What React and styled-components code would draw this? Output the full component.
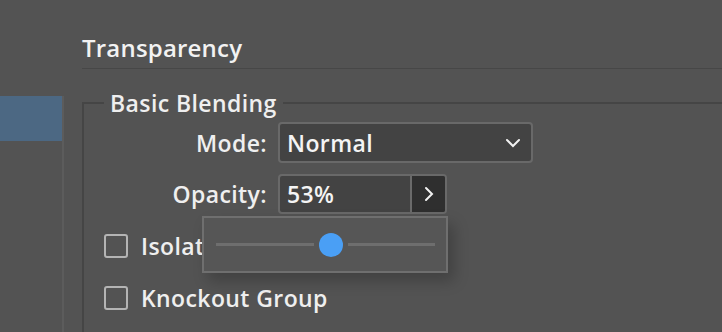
import React from 'react';
import styled, { createGlobalStyle } from 'styled-components';

const GlobalStyle = createGlobalStyle`
  html, body {
    margin: 0;
    padding: 0;
    background: #535353;
    overflow: hidden;
  }
  * { box-sizing: border-box; }
`;

const Window = styled.div`
  display: flex;
  width: 722px;
  height: 332px;
  background: #535353;
  font-family: 'Open Sans', 'Noto Sans', sans-serif;
  font-weight: 600;
  color: #efefef;
  overflow: hidden;
`;

const Sidebar = styled.aside`
  width: 64px;
  flex-shrink: 0;
  padding-top: 96px;
`;

const SideList = styled.div`
  height: 100%;
  border-right: 2px solid #5c5c5c;
`;

const SideItem = styled.div`
  height: 45px;
  background: ${p => (p.$active ? '#4c6883' : 'transparent')};
`;

const Main = styled.main`
  flex: 1;
  padding: 34px 0 0 18px;
  display: flex;
  flex-direction: column;
`;

const Title = styled.h1`
  margin: 0;
  font-size: 24px;
  font-weight: 600;
  letter-spacing: 0.2px;
  line-height: 28px;
  padding-bottom: 6px;
  color: #f2f2f2;
  border-bottom: 1px solid #474747;
`;

const Group = styled.fieldset`
  margin: 22px 0 -20px;
  padding: 7px 0 0 20px;
  border: 2px solid #454545;
  border-right: none;
  flex: 1;
`;

const Legend = styled.legend`
  padding: 0 6px;
  margin-left: 0;
  font-size: 23px;
  line-height: 24px;
  letter-spacing: 0.4px;
  color: #efefef;
`;

const FormGrid = styled.div`
  display: grid;
  grid-template-columns: 163px auto;
  column-gap: 11px;
  row-gap: 11px;
  align-items: center;
`;

const Label = styled.label`
  text-align: right;
  font-size: 23px;
  letter-spacing: 0.4px;
  color: #efefef;
`;

const Select = styled.div`
  width: 255px;
  height: 41px;
  border: 2px solid #696969;
  border-radius: 4px;
  background: #434343;
  display: flex;
  align-items: center;
  justify-content: space-between;
  padding: 0 10px 0 7px;
  font-size: 23px;
  letter-spacing: 0.4px;
  color: #f4f4f4;
`;

const FieldWrap = styled.div`
  position: relative;
  width: 169px;
`;

const NumberField = styled.div`
  height: 40px;
  border: 2px solid #696969;
  border-radius: 4px;
  background: #434343;
  display: flex;
  overflow: hidden;
`;

const NumberValue = styled.div`
  flex: 1;
  display: flex;
  align-items: center;
  padding-left: 7px;
  font-size: 23px;
  letter-spacing: 0.4px;
  color: #f4f4f4;
`;

const StepButton = styled.div`
  width: 35px;
  background: #2f2f2f;
  border-left: 2px solid #6a6a6a;
  display: flex;
  align-items: center;
  justify-content: center;
`;

const Popup = styled.div`
  position: absolute;
  top: calc(100% + 2px);
  right: -1px;
  width: 246px;
  height: 57px;
  background: #565656;
  border: 2px solid #6f6f6f;
  box-shadow: 6px 8px 14px rgba(0, 0, 0, 0.22);
  display: flex;
  align-items: center;
  padding: 0 11px 0 12px;
  z-index: 5;
`;

const Track = styled.div`
  flex: 1;
  display: flex;
  align-items: center;
`;

const TrackPart = styled.div`
  height: 3px;
  background: #6e6e6e;
  flex: ${p => p.$grow};
`;

const Thumb = styled.div`
  width: 24px;
  height: 24px;
  border-radius: 50%;
  background: #4a9ff5;
  margin: 0 5px;
  flex-shrink: 0;
`;

const Checks = styled.div`
  display: flex;
  flex-direction: column;
  gap: 28px;
  margin-top: 20px;
`;

const CheckRow = styled.label`
  display: flex;
  align-items: center;
  gap: 13px;
  height: 24px;
  font-size: 23px;
  letter-spacing: 0.4px;
  color: #efefef;
`;

const Box = styled.span`
  width: 24px;
  height: 24px;
  border: 2px solid #b4b4b4;
  border-radius: 3px;
  flex-shrink: 0;
`;

const ChevronDown = () => (
  <svg width="16" height="10" viewBox="0 0 16 10">
    <path d="M2 2 L8 8 L14 2" fill="none" stroke="#f2f2f2" strokeWidth="2" strokeLinecap="round" />
  </svg>
);

const ChevronRight = () => (
  <svg width="10" height="16" viewBox="0 0 10 16">
    <path d="M2 2 L8 8 L2 14" fill="none" stroke="#f2f2f2" strokeWidth="2" strokeLinecap="round" />
  </svg>
);

export default function App() {
  const opacity = 53;
  return (
    <Window>
      <GlobalStyle />
      <Sidebar>
        <SideList>
          <SideItem $active />
        </SideList>
      </Sidebar>
      <Main>
        <Title>Transparency</Title>
        <Group>
          <Legend>Basic Blending</Legend>
          <FormGrid>
            <Label>Mode:</Label>
            <Select>
              <span>Normal</span>
              <ChevronDown />
            </Select>
            <Label>Opacity:</Label>
            <FieldWrap>
              <NumberField>
                <NumberValue>{opacity}%</NumberValue>
                <StepButton>
                  <ChevronRight />
                </StepButton>
              </NumberField>
              <Popup>
                <Track>
                  <TrackPart $grow={opacity} />
                  <Thumb />
                  <TrackPart $grow={100 - opacity} />
                </Track>
              </Popup>
            </FieldWrap>
          </FormGrid>
          <Checks>
            <CheckRow><Box />Isolate Group</CheckRow>
            <CheckRow><Box />Knockout Group</CheckRow>
          </Checks>
        </Group>
      </Main>
    </Window>
  );
}
